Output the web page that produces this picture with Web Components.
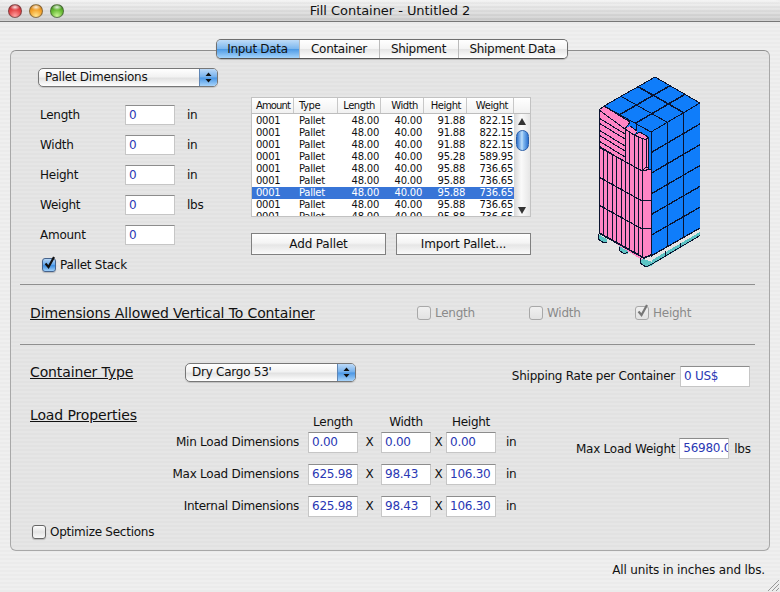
<!DOCTYPE html>
<html>
<head>
<meta charset="utf-8">
<title>Fill Container</title>
<style>
  html, body { margin: 0; padding: 0; background: #eee; }
  body { font: 12px "DejaVu Sans", "Liberation Sans", sans-serif; color: #111; }
</style>
</head>
<body>
<fill-container></fill-container>
<script>
const PIN = 'repeating-linear-gradient(#e6e6e6 0 2px, #e2e2e2 2px 4px)';

class MacTitlebar extends HTMLElement {
  constructor() {
    super();
    this.attachShadow({mode: 'open'}).innerHTML = `
      <style>
        :host { display: flex; align-items: center; height: 22px; box-sizing: border-box; position: relative;
          border-bottom: 1px solid #777; border-radius: 5px 5px 0 0;
          background: repeating-linear-gradient(rgba(255,255,255,.14) 0 2px, rgba(0,0,0,.02) 2px 4px), linear-gradient(#f2f2f2, #cbcbcb); }
        .lights { display: flex; gap: 7px; padding-left: 8px; }
        .dot { width: 14px; height: 14px; border-radius: 50%; box-sizing: border-box; border: 1px solid rgba(60,60,60,.55); }
        .r { background: radial-gradient(ellipse 5px 3px at 50% 18%, rgba(255,255,255,.85), transparent), radial-gradient(circle at 50% 90%, #ffa0a0 0, #e5484a 50%, #b52226 100%); }
        .y { background: radial-gradient(ellipse 5px 3px at 50% 18%, rgba(255,255,255,.85), transparent), radial-gradient(circle at 50% 90%, #ffe48e 0, #f4a52e 50%, #c5760f 100%); }
        .g { background: radial-gradient(ellipse 5px 3px at 50% 18%, rgba(255,255,255,.85), transparent), radial-gradient(circle at 50% 90%, #c8f494 0, #69bc35 50%, #357f17 100%); }
        .title { flex: 1; text-align: center; padding-right: 64px; font-size: 13px; letter-spacing: -.05px; color: #111; }
      </style>
      <div class="lights"><div class="dot r"></div><div class="dot y"></div><div class="dot g"></div></div>
      <div class="title"><slot></slot></div>`;
  }
}

class MacTabs extends HTMLElement {
  constructor() {
    super();
    this.attachShadow({mode: 'open'}).innerHTML = `
      <style>
        :host { display: flex; justify-content: center; position: relative; z-index: 2; height: 20px; margin-left: 3px; }
        .seg { display: flex; border: 1px solid #6f6f6f; border-bottom-color: #555; border-radius: 5px; overflow: hidden; box-shadow: 0 1px 1px rgba(0,0,0,.2); }
        .t { height: 18px; line-height: 18px; text-align: center; box-sizing: content-box; border-left: 1px solid #bbb; font-size: 12px; letter-spacing: -.3px;
          background: linear-gradient(#fff 0, #f4f4f4 50%, #e6e6e6 52%, #fff 100%); }
        .t:first-child { border-left: 0; background: linear-gradient(#bfdcf8 0, #7ab6ee 50%, #4e9be6 52%, #a5d4fb 100%); }
      </style>
      <div class="seg">
        <div class="t" style="width:82px">Input Data</div>
        <div class="t" style="width:79px">Container</div>
        <div class="t" style="width:78px">Shipment</div>
        <div class="t" style="width:108px">Shipment Data</div>
      </div>`;
  }
}

class MacPopup extends HTMLElement {
  constructor() {
    super();
    this.attachShadow({mode: 'open'}).innerHTML = `
      <style>
        :host { display: flex; height: 19px; box-sizing: border-box; border: 1px solid #777; border-radius: 5px; overflow: hidden;
          background: linear-gradient(#fff 0, #f2f2f2 45%, #e2e2e2 55%, #fff 100%); box-shadow: 0 1px 1px rgba(0,0,0,.15); }
        .txt { flex: 1; padding-left: 6px; line-height: 16px; font-size: 12px; white-space: nowrap; }
        .cap { width: 17px; display: flex; align-items: center; justify-content: center;
          background: linear-gradient(#bcd9f7 0, #74b0ec 48%, #4a96e4 52%, #a8d4fb 100%); border-left: 1px solid #5f86b5; }
      </style>
      <div class="txt"><slot></slot></div>
      <div class="cap"><svg width="7" height="11" viewBox="0 0 7 11"><path d="M3.5 0.5 L6.5 4 H0.5 Z M3.5 10.5 L0.5 7 H6.5 Z" fill="#111"/></svg></div>`;
  }
}

class MacField extends HTMLElement {
  constructor() {
    super();
    this.attachShadow({mode: 'open'}).innerHTML = `
      <style>
        :host { display: block; width: 50px; height: 21px; box-sizing: border-box; padding-left: 3px; overflow: hidden; white-space: nowrap;
          background: #fff; border: 1px solid #c6c6c6; border-top-color: #8c8c8c; color: #2a38b4; font-size: 12px; line-height: 19px; }
      </style><slot></slot>`;
  }
}

class MacCheck extends HTMLElement {
  constructor() {
    super();
    const on = this.hasAttribute('checked');
    const off = this.hasAttribute('disabled');
    this.attachShadow({mode: 'open'}).innerHTML = `
      <style>
        :host { display: inline-flex; align-items: center; gap: 4px; font-size: 12px; white-space: nowrap; position: relative; }
        .box { width: 14px; height: 14px; box-sizing: border-box; border-radius: 3px; border: 1px solid #666; flex: none;
          background: linear-gradient(#fdfdfd, #e4e4e4 50%, #f8f8f8); box-shadow: 0 1px 1px rgba(0,0,0,.2); overflow: visible; }
        .box.on { background: linear-gradient(#b6d6f6 0, #5ea4ea 50%, #3e8ee0 55%, #9fd0fa 100%); border-color: #46638c; }
        :host([disabled]) .box { border-color: #a8a8a8; background: linear-gradient(#f0f0f0, #e2e2e2); box-shadow: none; }
        :host([disabled]) { color: #8a8a8a; }
        svg { display: block; margin: -4px 0 0 0; overflow: visible; }
      </style>
      <div class="box ${on && !off ? 'on' : ''}">${on ? `<svg width="14" height="16" viewBox="0 0 14 16"><path d="M2.5 8.5 L5.5 12 L11 2" fill="none" stroke="${off ? '#777' : '#111'}" stroke-width="2.2"/></svg>` : ''}</div>
      <span><slot></slot></span>`;
  }
}

class MacButton extends HTMLElement {
  constructor() {
    super();
    this.attachShadow({mode: 'open'}).innerHTML = `
      <style>
        :host { display: block; width: 135px; height: 22px; box-sizing: border-box; border: 1px solid #808080; text-align: center; line-height: 20px; font-size: 12px; letter-spacing: -.15px;
          background: linear-gradient(#fff 0, #f4f4f4 45%, #e6e6e6 55%, #fafafa 100%); }
      </style><slot></slot>`;
  }
}

class DataTable extends HTMLElement {
  constructor() {
    super();
    const rows = [
      ['48.00','40.00','91.88','822.15'], ['48.00','40.00','91.88','822.15'], ['48.00','40.00','91.88','822.15'],
      ['48.00','40.00','95.28','589.95'], ['48.00','40.00','95.88','736.65'], ['48.00','40.00','95.88','736.65'],
      ['48.00','40.00','95.88','736.65'], ['48.00','40.00','95.88','736.65'], ['48.00','40.00','95.88','736.65']
    ];
    const body = rows.map((r, i) => `<div class="row ${i == 6 ? 'sel' : ''}"><span>0001</span><span>Pallet</span>${r.map(v => `<span class="n">${v}</span>`).join('')}</div>`).join('');
    this.attachShadow({mode: 'open'}).innerHTML = `
      <style>
        :host { display: block; width: 280px; height: 120px; box-sizing: border-box; border: 1px solid #c2c2c2; background: #fff; font-size: 10px; letter-spacing: -.25px; overflow: hidden; }
        .head, .row { display: grid; grid-template-columns: 42px 44px 43px 43px 43px 47px; }
        .head { height: 15px; grid-template-columns: 42px 44px 43px 43px 43px 47px 16px; border-bottom: 1px solid #bdbdbd; background: linear-gradient(#fff, #f1f1f1); line-height: 15px; letter-spacing: -.45px; }
        .head span { border-right: 1px solid #c8c8c8; padding-left: 4px; box-sizing: border-box; white-space: nowrap; overflow: hidden; }
        .head span:first-child { letter-spacing: -.9px; }
        .head span:nth-child(2) { padding-left: 5px; }
        .head .h { text-align: right; padding-right: 5px; }
        .head span:last-child { border-right: 0; }
        .wrap { display: flex; height: 103px; }
        .rows { width: 262px; overflow: hidden; padding-top: 1px; }
        .row { height: 12px; line-height: 12px; }
        .row span { padding-left: 4px; }
        .row span:nth-child(2) { padding-left: 5px; }
        .row .n { text-align: right; padding: 0 2px 0 0; }
        .row .n:last-child { padding-right: 1px; }
        .sel { background: #3875d7; color: #fff; }
        .bar { width: 16px; display: flex; flex-direction: column; align-items: center; justify-content: space-between; box-sizing: border-box; padding: 4px 0 3px;
          background: linear-gradient(90deg, #d8d8d8, #fafafa 45%, #e6e6e6); position: relative; }
        .thumb { position: absolute; top: 16px; left: 2px; width: 13px; height: 21px; box-sizing: border-box; border-radius: 7px; border: 1px solid #2a5ea8;
          background: linear-gradient(90deg, #2f74cf, #bfe0fb 45%, #80b8f0 60%, #2f74cf); }
      </style>
      <div class="head"><span>Amount</span><span>Type</span><span class="h">Length</span><span class="h">Width</span><span class="h">Height</span><span class="h">Weight</span><span></span></div>
      <div class="wrap">
        <div class="rows">${body}</div>
        <div class="bar">
          <svg width="8" height="7"><path d="M4 0 L8 7 H0 Z" fill="#333"/></svg>
          <div class="thumb"></div>
          <svg width="8" height="7"><path d="M4 7 L0 0 H8 Z" fill="#333"/></svg>
        </div>
      </div>`;
  }
}

class PalletView extends HTMLElement {
  constructor() {
    super();
    const lerp = (a, b, t) => [a[0] + (b[0] - a[0]) * t, a[1] + (b[1] - a[1]) * t];
    const line = (a, b, w) => `<line x1="${a[0]}" y1="${a[1]}" x2="${b[0]}" y2="${b[1]}" stroke-width="${w || 1}"/>`;
    const poly = (pts, fill) => `<polygon points="${pts.map(p => p.join(',')).join(' ')}" fill="${fill}" stroke="none"/>`;
    const BLUE = '#0f7dfa', PINK = '#ff85c4', TEAL = '#5cc4c4';
    const A = [655,77], L = [604,106], F = [651,132], R = [700,103], FB = [651,256], RB = [700,228];
    let s = '';
    // pallet boards and feet
    s += poly([[652,260],[700,232],[700,236],[652,265]], TEAL);
    s += poly([[598,234],[607,239],[607,243],[603,242],[598,238]], TEAL);
    s += poly([[619,246],[628,251],[628,254],[623,254],[619,250]], TEAL);
    s += poly([[640,258],[652,262],[652,266],[646,267],[640,263]], TEAL);
    // blue block
    s += poly([A, R, F, L], BLUE) + poly([F, R, RB, FB], BLUE) + poly([L, F, [651,180], [604,150]], BLUE);
    for (let i = 1; i < 3; i++) {
      s += line(lerp(A, L, i / 3), lerp(R, F, i / 3), i == 1 ? 1.5 : 1);
      s += line(lerp(A, R, i / 3), lerp(L, F, i / 3), 1.5);
      s += line(lerp(F, R, i / 3), lerp(FB, RB, i / 3));
    }
    for (let i = 1; i < 6; i++) s += line(lerp(F, FB, i / 6), lerp(R, RB, i / 6), 1.3);
    s += line(A, L) + line(A, R) + line(L, F) + line(F, R) + line(F, FB) + line(FB, RB, 1.3);
    s += line([636,125],[636,160]);
    // pink upper layered block
    s += poly([[599,110],[604,106],[630,122],[625,129]], PINK);
    s += poly([[599,110],[625,129],[625,165],[599,149]], PINK);
    [118,123,130,135,141,146].forEach(y => { s += line([599,y],[625,y + 16]); });
    s += line([599,110],[604,106]) + line([604,106],[630,122]) + line([630,122],[625,129]) + line([599,110],[625,129]);
    // tall blocks
    s += poly([[625,129],[630,126],[637,131],[634,135],[634,175],[625,170]], PINK);
    s += poly([[634,135],[640,132],[648,137],[648,170],[646,175],[634,172]], PINK);
    s += line([625,129],[634,135]) + line([630,126],[637,131]) + line([634,135],[646,140]) + line([640,132],[648,137]) + line([646,140],[648,137]) + line([634,135],[640,132]);
    s += line([648,137],[648,168]) + line([625,129],[625,165]);
    [[629,132],[634,135],[638,137],[642,139],[646,140]].forEach(p => { s += line(p,[p[0],172]); });
    // pink lower tiers
    s += poly([[599,147],[642,171],[642,260],[599,233]], PINK);
    s += poly([[642,171],[646,167],[651,170],[651,255],[644,259],[642,258]], PINK);
    for (let x = 603.5; x < 642; x += 4.4) s += line([x, 147 + (x - 599) * .55],[x, 233 + (x - 599) * .55]);
    [147,177,205].forEach((y, i) => { s += line([599,y],[642,y + 24], 1.2); s += line([642,y + 24],[651,y + 23 - (i ? 0 : 1)]); });
    s += line([599,110],[599,233]) + line([642,171],[642,258]) + line([651,132],[651,257]) + line([642,171],[646,167]) + line([646,167],[651,170]);
    s += line([599,233],[644,258],1.6) + line([644,258],[651,255],1.6);
    // outlines of feet
    s += line([598,234],[598,239]) + line([598,239],[604,243]) + line([604,243],[607,242]);
    s += line([619,247],[619,250]) + line([619,250],[624,254]) + line([624,254],[628,252]);
    s += line([640,258],[640,263]) + line([640,263],[646,267]) + line([646,267],[652,264]) + line([652,264],[700,235.5]);
    s += line([665,251],[665,256]) + line([680,243],[680,247]);
    this.attachShadow({mode: 'open'}).innerHTML = `
      <style>:host { display: block; width: 115px; height: 200px; } svg { display: block; }</style>
      <svg width="115" height="200" viewBox="590 70 115 200" stroke="#0a1430" shape-rendering="crispEdges">${s}</svg>`;
  }
}

class SectionTitle extends HTMLElement {
  constructor() {
    super();
    this.attachShadow({mode: 'open'}).innerHTML = `
      <style>:host { display: block; font-size: 14px; line-height: 16px; letter-spacing: -.13px; text-decoration: underline; white-space: nowrap; }</style><slot></slot>`;
  }
}

class FillContainer extends HTMLElement {
  constructor() {
    super();
    const field = (l, u) => `<span>${l}</span><mac-field>0</mac-field><span>${u}</span>`;
    const loadRow = (l, a, b, c) => `<div class="rl">${l}</div><mac-field>${a}</mac-field><div class="x">X</div><mac-field>${b}</mac-field><div class="x">X</div><mac-field>${c}</mac-field><div class="u">in</div>`;
    this.attachShadow({mode: 'open'}).innerHTML = `
      <style>
        :host { display: flex; flex-direction: column; width: 780px; height: 592px; overflow: hidden; position: relative; font-size: 12px; letter-spacing: -.25px;
          background: repeating-linear-gradient(#efefef 0 2px, #ebebeb 2px 4px); }
        .tabwrap { padding-top: 17px; }
        .panel { margin: -9px 10px 0; height: 501px; box-sizing: border-box; border: 1px solid #a8a8a8; border-top-color: #8e8e8e; border-radius: 6px; background: ${PIN}; }
        .top { display: flex; height: 233px; padding-left: 27px; }
        .left { width: 213px; padding-top: 17px; box-sizing: border-box; }
        .left mac-popup { width: 180px; }
        .form { display: grid; grid-template-columns: 85px 50px auto; grid-auto-rows: 30px; align-items: center; margin: 13px 0 0 2px; column-gap: 0; }
        .form span:nth-child(3n) { padding-left: 12px; }
        .form mac-field { height: 20px; line-height: 18px; }
        .stack { margin: 8px 0 0 4px; }
        .mid { padding-top: 46px; }
        .btns { display: flex; gap: 10px; margin-top: 16px; }
        .art { margin: 19px 0 0 59px; }
        hr { margin: 0 14px 0 9px; border: 0; height: 1px; background: #8f8f8f; }
        .vert { display: flex; align-items: center; height: 59px; padding: 0 0 3px 19px; box-sizing: border-box; }
        .vert .t { width: 387px; }
        .vert mac-check:nth-child(2) { width: 112px; }
        .vert mac-check:nth-child(3) { width: 106px; }
        .ctype { display: flex; align-items: center; height: 44px; padding: 10px 19px 0 19px; box-sizing: border-box; margin-bottom: 16px; }
        .ctype section-title { width: 155px; }
        .ctype mac-popup { width: 171px; margin-top: 1px; }
        .ctype .rate { margin: 8px 0 0 auto; padding-right: 5px; }
        .ctype mac-field { width: 70px; margin-top: 8px; flex: none; }
        .load { display: flex; padding-left: 19px; }
        .grid { display: grid; grid-template-columns: 278px 50px 23px 50px 15px 50px 40px; grid-template-rows: 27px 21px 11px 21px 11px 21px; }
        .grid .gap { grid-column: 1 / -1; }
        .grid section-title { align-self: start; margin-top: 2px; }
        .hd { text-align: center; align-self: end; line-height: 17px; padding-bottom: 1px; }
        .rl { text-align: right; padding-right: 9px; line-height: 21px; }
        .x { text-align: center; line-height: 21px; }
        .u { padding-left: 10px; line-height: 21px; }
        .maxw { display: flex; align-items: center; margin: 33px 0 0 40px; height: 21px; }
        .maxw span:first-child { padding-right: 4px; }
        .maxw span:last-child { padding-left: 5px; }
        .opt { margin: 8px 0 0 21px; display: flex; }
        .status { text-align: right; padding: 12px 15px 0 0; line-height: 15px; letter-spacing: -.14px; }
        .grip { position: absolute; right: 1px; bottom: 1px; }
      </style>
      <mac-titlebar>Fill Container - Untitled 2</mac-titlebar>
      <div class="tabwrap"><mac-tabs></mac-tabs></div>
      <div class="panel">
        <div class="top">
          <div class="left">
            <mac-popup>Pallet Dimensions</mac-popup>
            <div class="form">
              ${field('Length', 'in')}${field('Width', 'in')}${field('Height', 'in')}${field('Weight', 'lbs')}${field('Amount', '')}
            </div>
            <div class="stack"><mac-check checked>Pallet Stack</mac-check></div>
          </div>
          <div class="mid">
            <data-table></data-table>
            <div class="btns"><mac-button>Add Pallet</mac-button><mac-button>Import Pallet...</mac-button></div>
          </div>
          <div class="art"><pallet-view></pallet-view></div>
        </div>
        <hr>
        <div class="vert">
          <div class="t"><section-title>Dimensions Allowed Vertical To Container</section-title></div>
          <mac-check disabled>Length</mac-check>
          <mac-check disabled>Width</mac-check>
          <mac-check disabled checked>Height</mac-check>
        </div>
        <hr>
        <div class="ctype">
          <section-title>Container Type</section-title>
          <mac-popup>Dry Cargo 53'</mac-popup>
          <span class="rate">Shipping Rate per Container</span>
          <mac-field>0 US$</mac-field>
        </div>
        <div class="load">
          <div class="grid">
            <section-title>Load Properties</section-title>
            <div class="hd">Length</div><div></div><div class="hd">Width</div><div></div><div class="hd">Height</div><div></div>
            ${loadRow('Min Load Dimensions', '0.00', '0.00', '0.00')}
            <div class="gap"></div>
            ${loadRow('Max Load Dimensions', '625.98', '98.43', '106.30')}
            <div class="gap"></div>
            ${loadRow('Internal Dimensions', '625.98', '98.43', '106.30')}
          </div>
          <div class="maxw"><span>Max Load Weight</span><mac-field>56980.0</mac-field><span>lbs</span></div>
        </div>
        <div class="opt"><mac-check>Optimize Sections</mac-check></div>
      </div>
      <div class="status">All units in inches and lbs.</div>
      <svg class="grip" width="11" height="11" viewBox="0 0 11 11" stroke="#999"><path d="M0 11 L11 0 M4 11 L11 4 M8 11 L11 8"/></svg>`;
  }
}

customElements.define('mac-titlebar', MacTitlebar);
customElements.define('mac-tabs', MacTabs);
customElements.define('mac-popup', MacPopup);
customElements.define('mac-field', MacField);
customElements.define('mac-check', MacCheck);
customElements.define('mac-button', MacButton);
customElements.define('data-table', DataTable);
customElements.define('pallet-view', PalletView);
customElements.define('section-title', SectionTitle);
customElements.define('fill-container', FillContainer);
</script>
</body>
</html>
